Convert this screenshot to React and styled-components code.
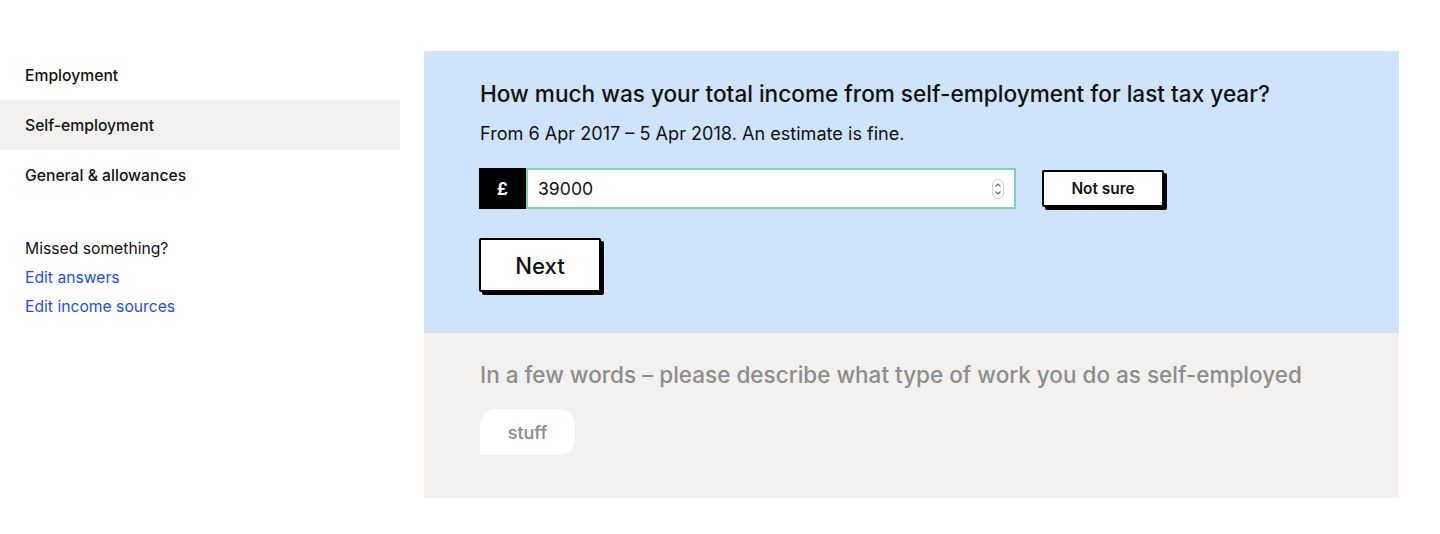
import React from "react";
import styled, { createGlobalStyle } from "styled-components";

const Global = createGlobalStyle`
  html, body { margin: 0; padding: 0; background: #fff; }
  body { font-family: Inter, "Noto Sans", sans-serif; color: #111; -webkit-font-smoothing: antialiased; }
  * { box-sizing: border-box; }
`;

const Page = styled.div`
  display: flex;
  align-items: flex-start;
  padding-top: 50px;
  width: 1440px;
  height: 534px;
`;

const Sidebar = styled.nav`
  width: 400px;
  flex: none;
  display: flex;
  flex-direction: column;
`;

const NavItem = styled.div`
  height: 50px;
  display: flex;
  align-items: center;
  padding-left: 25px;
  font-size: 15.7px;
  font-weight: 500;
  color: #111;
  background: ${(p) => (p.$active ? "#f2f1ef" : "transparent")};
`;

const Missed = styled.div`
  margin-top: 34px;
  padding-left: 25px;
  display: flex;
  flex-direction: column;
  font-size: 15.7px;
  line-height: 29px;
`;

const MissedTitle = styled.div`
  color: #111;
`;

const Link = styled.a`
  color: #1d4fd8;
  text-decoration: none;
`;

const Main = styled.main`
  margin-left: 24px;
  margin-top: 1px;
  width: 975px;
  display: flex;
  flex-direction: column;
`;

const Active = styled.section`
  background: #cfe4fa;
  height: 282px;
  padding: 29px 56px 0 56px;
`;

const Question = styled.h2`
  margin: 0;
  font-size: 22.6px;
  font-weight: 500;
  line-height: 28px;
  color: #111;
`;

const Hint = styled.p`
  margin: 14px 0 0;
  font-size: 18.1px;
  line-height: 22px;
  color: #111;
`;

const InputRow = styled.div`
  margin-top: 24px;
  margin-left: -1px;
  display: flex;
  align-items: flex-start;
`;

const Prefix = styled.div`
  width: 47px;
  height: 41px;
  background: #000;
  color: #fff;
  font-weight: 700;
  font-size: 17px;
  display: flex;
  align-items: center;
  justify-content: center;
`;

const Field = styled.div`
  width: 490px;
  height: 41px;
  background: #fff;
  border: 2px solid #7fd6ae;
  display: flex;
  align-items: center;
  padding: 0 10px 0 10px;
  font-size: 17.6px;
  color: #111;
`;

const Value = styled.span`
  flex: 1;
`;

const Spinner = styled.svg`
  width: 12px;
  height: 20px;
  margin-top: 1px;
`;

const Button = styled.button`
  font-family: Inter, "Noto Sans", sans-serif;
  background: #fff;
  color: #111;
  border: 2px solid #000;
  border-radius: 2px;
  box-shadow: 3px 3px 0 0 #000;
  padding: 0;
  font-weight: ${(p) => (p.$big ? 500 : 600)};
  font-size: ${(p) => (p.$big ? "22.2px" : "15.4px")};
  width: 122px;
  height: ${(p) => (p.$big ? "54px" : "37px")};
  cursor: pointer;
`;

const NotSure = styled(Button)`
  margin-left: 26px;
  margin-top: 2px;
`;

const Next = styled(Button)`
  margin-top: 29px;
  margin-left: -1px;
`;

const Upcoming = styled.section`
  background: #f2f1ef;
  height: 165px;
  padding: 28px 56px 0 56px;
`;

const MutedQuestion = styled.h2`
  margin: 0;
  font-size: 22.5px;
  font-weight: 500;
  line-height: 28px;
  color: #8c8c8c;
`;

const Pill = styled.div`
  margin-top: 20px;
  width: 95px;
  height: 46px;
  background: #fff;
  border-radius: 16px 16px 16px 0;
  color: #8a8a8a;
  font-size: 18px;
  font-weight: 500;
  display: flex;
  align-items: center;
  justify-content: center;
`;

export default function App() {
  return (
    <>
      <Global />
      <Page>
        <Sidebar>
          <NavItem>Employment</NavItem>
          <NavItem $active>Self-employment</NavItem>
          <NavItem>General &amp; allowances</NavItem>
          <Missed>
            <MissedTitle>Missed something?</MissedTitle>
            <Link href="#">Edit answers</Link>
            <Link href="#">Edit income sources</Link>
          </Missed>
        </Sidebar>
        <Main>
          <Active>
            <Question>How much was your total income from self-employment for last tax year?</Question>
            <Hint>From 6 Apr 2017 – 5 Apr 2018. An estimate is fine.</Hint>
            <InputRow>
              <Prefix>£</Prefix>
              <Field>
                <Value>39000</Value>
                <Spinner viewBox="0 0 12 20">
                  <rect x="0.5" y="0.5" width="11" height="19" rx="5.5" fill="#fff" stroke="#cfcfcf" />
                  <path d="M3.5 7.5 L6 5 L8.5 7.5" fill="none" stroke="#666" strokeWidth="1.1" />
                  <path d="M3.5 12.5 L6 15 L8.5 12.5" fill="none" stroke="#666" strokeWidth="1.1" />
                </Spinner>
              </Field>
              <NotSure>Not sure</NotSure>
            </InputRow>
            <Next $big>Next</Next>
          </Active>
          <Upcoming>
            <MutedQuestion>In a few words – please describe what type of work you do as self-employed</MutedQuestion>
            <Pill>stuff</Pill>
          </Upcoming>
        </Main>
      </Page>
    </>
  );
}
